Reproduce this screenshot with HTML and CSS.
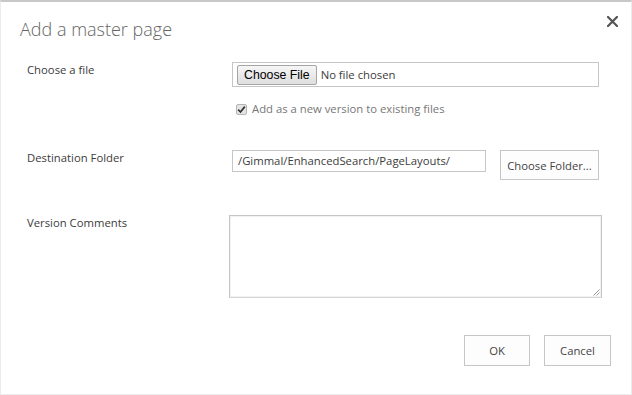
FILE: index.html
```html
<!DOCTYPE html>
<html>
<head>
<meta charset="utf-8">
<link rel="stylesheet" href="styles.css">
</head>
<body>
<div class="dialog">
  <div class="header">
    <h1 class="title">Add a master page</h1>
    <span class="close" aria-label="Close">
      <svg width="11" height="11" viewBox="0 0 11 11"><path d="M1 1 L10 10 M10 1 L1 10" stroke="#555" stroke-width="2.2" stroke-linecap="square"/></svg>
    </span>
  </div>

  <div class="row row-file">
    <div class="label">Choose a file</div>
    <div class="control">
      <div class="filebox">
        <span class="filebtn">Choose File</span>
        <span class="filetext">No file chosen</span>
      </div>
      <div class="check">
        <span class="cb"><svg width="9" height="9" viewBox="0 0 9 9"><path d="M1.2 4.6 L3.5 7 L7.8 1.6" fill="none" stroke="#333" stroke-width="1.7"/></svg></span>
        <span class="checktext">Add as a new version to existing files</span>
      </div>
    </div>
  </div>

  <div class="row row-dest">
    <div class="label">Destination Folder</div>
    <div class="control dest">
      <div class="textbox">/Gimmal/EnhancedSearch/PageLayouts/</div>
      <span class="btn folderbtn">Choose Folder...</span>
    </div>
  </div>

  <div class="row row-comments">
    <div class="label">Version Comments</div>
    <div class="control">
      <div class="textarea">
        <svg class="grip" width="7" height="7" viewBox="0 0 7 7"><path d="M6.5 0.5 L0.5 6.5 M6.5 3.5 L3.5 6.5" stroke="#999" stroke-width="1"/></svg>
      </div>
    </div>
  </div>

  <div class="actions">
    <span class="btn ok">OK</span>
    <span class="btn cancel">Cancel</span>
  </div>
</div>
</body>
</html>
```
FILE: styles.css
```css
* { box-sizing: border-box; }
html, body { margin: 0; padding: 0; background: #fff; }
body { font-family: "Open Sans", "Noto Sans", sans-serif; color: #444; }

.dialog {
  width: 632px;
  height: 395px;
  border-top: 2px solid #c8c8c8;
  border-left: 1px solid #ececec;
  border-right: 1px solid #ececec;
  border-bottom: 1px solid #ececec;
  display: flex;
  flex-direction: column;
}

.header {
  display: flex;
  justify-content: space-between;
  align-items: flex-start;
  padding: 0 13px 0 19px;
}
.title {
  margin: 15px 0 0 0;
  font-weight: 300;
  font-size: 18px;
  line-height: 24px;
  color: #666;
}
.close { margin-top: 14px; display: block; height: 11px; }
.close svg { display: block; }

.row {
  display: grid;
  grid-template-columns: 205px 1fr;
  padding-left: 26px;
}
.label {
  font-size: 11.3px;
  line-height: 16px;
  color: #3c3c3c;
}
.row-file { margin-top: 21px; }

.filebox {
  width: 367px;
  height: 25px;
  border: 1px solid #c6c6c6;
  display: flex;
  align-items: center;
  padding-left: 4px;
}
.filebtn {
  font-family: "Liberation Sans", Arial, sans-serif;
  font-size: 12.3px;
  color: #000;
  height: 20px;
  line-height: 18px;
  padding: 0 6px;
  border: 1px solid #a5a5a5;
  border-radius: 2px;
  background: linear-gradient(#f6f6f6, #dedede);
}
.filetext {
  font-size: 11.3px;
  color: #3c3c3c;
  margin-left: 4px;
}

.check {
  display: flex;
  align-items: center;
  margin-top: 14px;
  margin-left: 4px;
}
.cb {
  width: 11px;
  height: 11px;
  border: 1px solid #b5b5b5;
  border-radius: 2px;
  background: #e4e4e4;
  display: flex;
  align-items: center;
  justify-content: center;
}
.cb svg { display: block; }
.checktext {
  margin-left: 5px;
  font-size: 11.3px;
  line-height: 16px;
  color: #777;
}

.row-dest { margin-top: 33px; }
.dest { display: flex; align-items: flex-start; }
.textbox {
  width: 254px;
  height: 22px;
  border: 1px solid #c6c6c6;
  font-size: 11.3px;
  line-height: 20px;
  padding-left: 5px;
  color: #3c3c3c;
}
.btn {
  display: inline-flex;
  align-items: center;
  justify-content: center;
  border: 1px solid #c6c6c6;
  background: #fdfdfd;
  font-size: 11.3px;
  color: #444;
}
.folderbtn {
  margin-left: 14px;
  width: 99px;
  height: 30px;
}

.row-comments { margin-top: 35px; }
.row-comments .control { margin-left: -3px; }
.textarea {
  position: relative;
  width: 373px;
  height: 83px;
  border: 1px solid #c6c6c6;
  border-bottom-color: #d5d5d5;
  box-shadow: inset 0 0 0 1px #f1f1f1;
}
.grip { position: absolute; right: 1px; bottom: 1px; }

.actions {
  display: flex;
  justify-content: flex-end;
  gap: 14px;
  margin-top: 37px;
  padding-right: 20px;
}
.ok { width: 66px; height: 31px; }
.cancel { width: 67px; height: 31px; }
```
